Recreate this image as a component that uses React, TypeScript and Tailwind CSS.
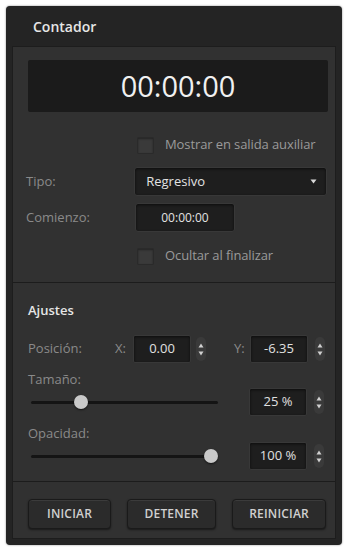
import { type ReactNode } from 'react'

const FONT = { fontFamily: '"Open Sans", "Noto Sans", Arial, sans-serif' }

function Checkbox({ label }: { label: string }) {
  return (
    <div className="flex items-center h-[20px] pl-[111px]">
      <span className="w-[17px] h-[17px] bg-[#3a3a3a] border border-[#2a2a2a] rounded-[1px] shadow-[inset_0_1px_2px_rgba(0,0,0,0.4)]" />
      <span className="ml-[11px] text-[13px] text-[#9a9a9a] whitespace-nowrap tracking-[-0.1px]">{label}</span>
    </div>
  )
}

function Spinner() {
  return (
    <span className="w-[10px] h-[24px] rounded-full bg-[#3a3a3a] flex flex-col items-center justify-center gap-[3px]">
      <svg width="6" height="5" viewBox="0 0 6 5"><path d="M3 0.5 L5.5 4.5 L0.5 4.5 Z" fill="#cfcfcf" /></svg>
      <svg width="6" height="5" viewBox="0 0 6 5"><path d="M0.5 0.5 L5.5 0.5 L3 4.5 Z" fill="#cfcfcf" /></svg>
    </span>
  )
}

function NumBox({ children }: { children: ReactNode }) {
  return (
    <span className="w-[58px] h-[28px] bg-[#1e1e1e] border border-[#383838] rounded-[2px] flex items-center justify-center text-[13px] text-[#e0e0e0] shadow-[inset_0_1px_3px_rgba(0,0,0,0.6)]">
      {children}
    </span>
  )
}

function Slider({ pos }: { pos: number }) {
  return (
    <div className="relative w-[187px] h-[16px] flex items-center ml-[3px]">
      <div className="w-full h-[3px] bg-[#141414] rounded-full" />
      <span className="absolute top-[1px] w-[14px] h-[14px] rounded-full bg-[#c9c9c9] shadow-[0_1px_2px_rgba(0,0,0,0.6)]" style={{ left: pos - 7 }} />
    </div>
  )
}

function Btn({ label, w }: { label: string; w: string }) {
  return (
    <button className={`${w} h-[30px] rounded-[4px] bg-[#2b2b2b] border border-[#1a1a1a] shadow-[inset_0_1px_0_rgba(255,255,255,0.08),0_1px_2px_rgba(0,0,0,0.5)] text-[12px] font-semibold text-[#d0d0d0] tracking-[0.2px]`}>
      {label}
    </button>
  )
}

export default function App() {
  return (
    <div className="w-[348px] h-[548px] bg-white pt-[6px] px-[6px] pb-[3px]" style={FONT}>
      <div className="h-full bg-[#242424] rounded-[4px] flex flex-col shadow-[0_0_2px_rgba(0,0,0,0.5)]">
        <div className="h-[40px] flex items-center pl-[27px] text-[14px] font-semibold text-[#e6e6e6]">Contador</div>

        <div className="mx-[6px] mb-[6px] flex-1 bg-[#313131] border border-[#1d1d1d] flex flex-col">
          <div className="pl-[13px] pr-[8px] pt-[13px] pb-[16px] border-b border-[#1c1c1c]">
            <div className="ml-[2px] w-[300px] h-[52px] bg-[#1b1b1b] rounded-[2px] flex items-center justify-center text-[29px] text-[#f0f0f0] font-normal">
              00:00:00
            </div>
            <div className="mt-[23px]"><Checkbox label="Mostrar en salida auxiliar" /></div>
            <div className="mt-[12px] flex items-center">
              <span className="w-[109px] text-[13px] text-[#8a8a8a]">Tipo:</span>
              <div className="w-[194px] h-[29px] bg-[#1e1e1e] border border-[#383838] rounded-[3px] flex items-center justify-between pl-[11px] pr-[9px] text-[13px] text-[#e2e2e2] shadow-[inset_0_1px_3px_rgba(0,0,0,0.6)]">
                <span>Regresivo</span>
                <svg width="7" height="5" viewBox="0 0 7 5"><path d="M0.5 0.5 L6.5 0.5 L3.5 4.5 Z" fill="#d8d8d8" /></svg>
              </div>
            </div>
            <div className="mt-[7px] flex items-center">
              <span className="w-[109px] text-[13px] text-[#8a8a8a]">Comienzo:</span>
              <div className="w-[100px] h-[29px] bg-[#1e1e1e] border border-[#383838] rounded-[3px] flex items-center justify-center text-[12px] text-[#e2e2e2] shadow-[inset_0_1px_3px_rgba(0,0,0,0.6)]">
                00:00:00
              </div>
            </div>
            <div className="mt-[14px]"><Checkbox label="Ocultar al finalizar" /></div>
          </div>

          <div className="pl-[15px] pr-[8px] pt-[19px] pb-[11px] border-b border-[#1c1c1c]">
            <div className="h-[18px] flex items-center text-[13px] font-semibold text-[#e6e6e6]">Ajustes</div>
            <div className="mt-[15px] flex items-center h-[28px]">
              <span className="w-[87px] text-[13px] text-[#8a8a8a]">Posición:</span>
              <span className="w-[18px] text-[13px] text-[#8a8a8a]">X:</span>
              <NumBox>0.00</NumBox>
              <span className="ml-[5px]"><Spinner /></span>
              <span className="ml-[28px] w-[16px] text-[13px] text-[#8a8a8a]">Y:</span>
              <NumBox>-6.35</NumBox>
              <span className="ml-[7px]"><Spinner /></span>
            </div>
            <div className="mt-[9px] h-[16px] flex items-center text-[13px] text-[#8a8a8a]">Tamaño:</div>
            <div className="flex items-center h-[28px]">
              <Slider pos={50} />
              <span className="ml-[31px]"><NumBox>25 %</NumBox></span>
              <span className="ml-[7px]"><Spinner /></span>
            </div>
            <div className="mt-[10px] h-[16px] flex items-center text-[13px] text-[#8a8a8a]">Opacidad:</div>
            <div className="flex items-center h-[28px]">
              <Slider pos={180} />
              <span className="ml-[31px]"><NumBox>100 %</NumBox></span>
              <span className="ml-[7px]"><Spinner /></span>
            </div>
          </div>

          <div className="pl-[15px] pr-[9px] pt-[17px] flex items-center gap-[16px]">
            <Btn label="INICIAR" w="w-[84px]" />
            <Btn label="DETENER" w="w-[90px]" />
            <Btn label="REINICIAR" w="w-[95px]" />
          </div>
        </div>
      </div>
    </div>
  )
}
